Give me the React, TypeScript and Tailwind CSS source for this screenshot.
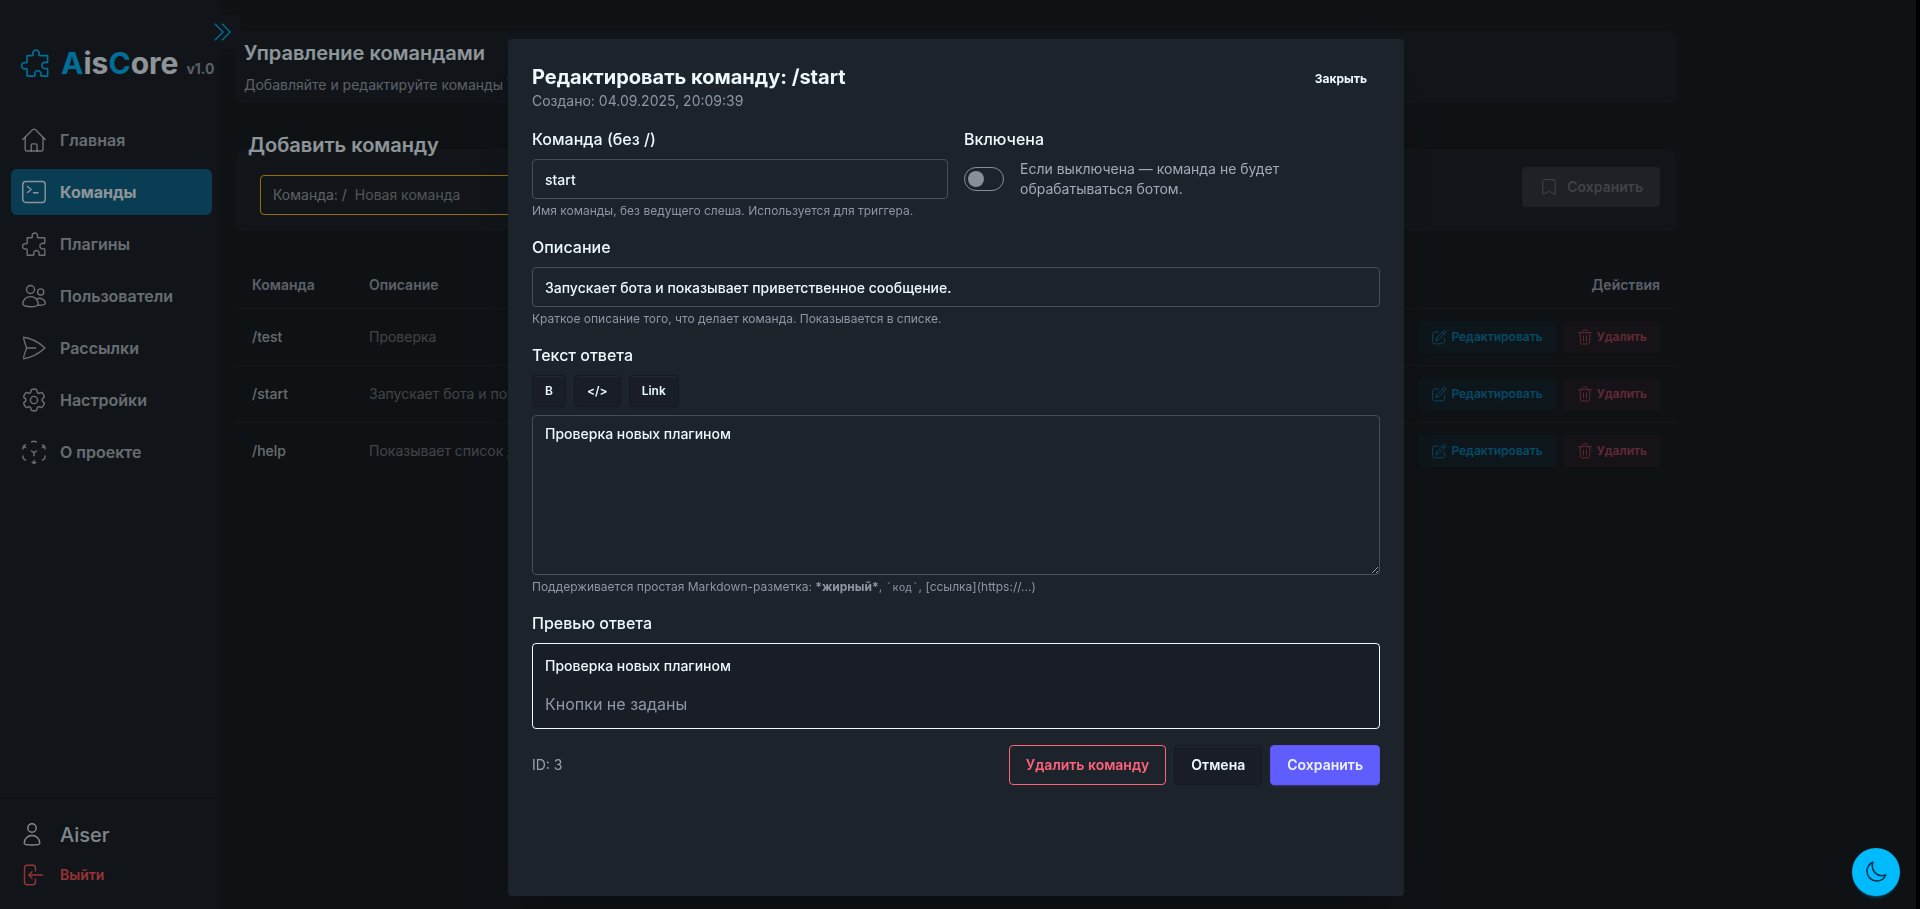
import React, { useState } from "react";
import { HiOutlineBookmark, HiOutlineCog6Tooth, HiOutlineMoon } from "react-icons/hi2";

type IconProps = { className?: string };

function Svg({ className = "size-6", children }: IconProps & { children: React.ReactNode }) {
  return (
    <svg
      className={"shrink-0 " + className}
      viewBox="0 0 24 24"
      fill="none"
      stroke="currentColor"
      strokeWidth="1.4"
      strokeLinecap="round"
      strokeLinejoin="round"
      aria-hidden="true"
    >
      {children}
    </svg>
  );
}

const PuzzleIcon = ({ className }: IconProps) => (
  <Svg className={className}>
    <path d="M5.2 5.7h4.3c.7 0 1-.5.8-1.1a2.7 2.7 0 1 1 5.1 0c-.2.6.1 1.1.8 1.1h6.6v5.1c0 .7-.5 1-1.1.7a2.8 2.8 0 1 0 0 5.2c.6-.3 1.1.1 1.1.7v5.8h-5c-.7 0-1-.5-.8-1.1a2.7 2.7 0 1 0-5.1 0c.2.6-.1 1.1-.8 1.1H5.200v-5.500c0-.7-.5-1-1.100-.8a2.700 2.700 0 1 1 0-5.100c.6.2 1.100-.1 1.100-.8Z" />
  </Svg>
);

const HomeIcon = () => (
  <Svg>
    <path d="m.8 11.600 9.700-9.800c.9-.9 2.100-.9 3 0l9.700 9.800" />
    <path d="M3.200 9.500v11.700c0 1.100.7 1.800 1.800 1.800h14.200c1.100 0 1.800-.7 1.800-1.800V9.500" />
    <path d="M9.200 23v-5.700c0-.9.5-1.400 1.300-1.400h3.200c.8 0 1.300.5 1.300 1.400V23" />
  </Svg>
);

const TerminalIcon = () => (
  <Svg>
    <rect x=".8" y="1.500" width="22.400" height="21" rx="3" />
    <path d="m5.500 6.500 3.700 3-3.700 3M11.500 12.700h4.500" />
  </Svg>
);

const UsersIcon = () => (
  <Svg>
    <circle cx="8.500" cy="5.500" r="4" />
    <circle cx="18.700" cy="8" r="3.100" />
    <path d="M.8 20c0-4 3.200-7.400 7.700-7.400s7.700 3.400 7.700 7.400c0 3.600-15.400 3.600-15.400 0Z" />
    <path d="M14.800 14.800c4.200-1.700 8.400 1 8.400 4.700 0 1.300-3.400 2-7 1.600" />
  </Svg>
);

const SendIcon = () => (
  <Svg>
    <path d="M1.500 1.300C9.500 2.400 16.600 6 23 11.900 16.600 17.700 9.500 21.400 1.500 22.700c-.4-.2 1.900-7.300 3.100-10.700C3.500 8.500 1 1.500 1.500 1.300ZM4.600 12h9" />
  </Svg>
);

const ProjectIcon = () => (
  <Svg>
    <path d="M9.700 1.900c1.500-.9 3.100-.9 4.600 0M10.200 22.300l1.800 1 1.800-1M12 20.500v2.700M1 9V7.500C1 6.300 2 5.700 3.500 5M23 9V7.500c0-1.200-1-1.800-2.500-2.500M1 16v1.500c0 1.100.9 1.800 2.500 2.500M23 16v1.500c0 1.100-.9 1.800-2.500 2.500M1.300 6.300l2.300 1.300M22.700 6.300l-2.300 1.300M9.500 11l2.500 1.700 2.500-1.700M12 12.700v3" />
  </Svg>
);

const PersonIcon = () => (
  <Svg>
    <circle cx="12" cy="5" r="4.200" />
    <path d="M4.200 20.200c0-4.400 3.300-7.700 7.800-7.700s7.800 3.300 7.800 7.700c0 2.400-15.600 2.400-15.600 0Z" />
  </Svg>
);

const LogoutIcon = () => (
  <Svg>
    <path d="M15.500 8V5c0-1.700-1-2.700-2.700-2.700H7.200C5.500 2.300 4.500 3.300 4.500 5v14c0 1.700 1 2.700 2.700 2.700h5.600c1.700 0 2.700-1 2.700-2.700v-3" />
    <path d="M22.500 12H9.300M12 8.800 8.800 12l3.200 3.200" />
  </Svg>
);

const EditIcon = () => (
  <Svg className="size-4">
    <path d="M11 4.500H5.500C3.600 4.500 2.500 5.700 2.500 7.500v11.700c0 1.800 1.100 3 3 3h11.700c1.800 0 3-1.200 3-3V14" />
    <path d="m9 13 10.200-10.700c1.200-1.300 4.200 1.600 3 3L11.700 16l-4.500 1.500L9 13ZM17 4.700 19.900 7.500" />
  </Svg>
);

const TrashIcon = () => (
  <Svg className="size-4">
    <path d="M2.500 5.500h19M8 5.300C8 2.700 8.800 1.500 10 1.500h4c1.200 0 2 1.200 2 3.800M4.500 5.800l.7 14c.1 1.800 1.100 2.700 2.800 2.700h8c1.700 0 2.700-.9 2.800-2.700l.7-14M9.700 10.500v7.500M14.300 10.500v7.500" />
  </Svg>
);

const navItems = [
  { label: "Главная", icon: <HomeIcon /> },
  { label: "Команды", icon: <TerminalIcon />, active: true },
  { label: "Плагины", icon: <PuzzleIcon /> },
  { label: "Пользователи", icon: <UsersIcon /> },
  { label: "Рассылки", icon: <SendIcon /> },
  {
    label: "Настройки",
    icon: <HiOutlineCog6Tooth className="size-6 shrink-0" viewBox="2 2 20 20" strokeWidth={1.2} />,
  },
  { label: "О проекте", icon: <ProjectIcon /> },
];

const commands = [
  { name: "/test", description: "Проверка" },
  { name: "/start", description: "Запускает бота и показывает приветственное сообщение." },
  { name: "/help", description: "Показывает список доступных команд." },
];

function Sidebar() {
  return (
    <aside className="sticky top-0 flex h-screen w-[220px] shrink-0 flex-col border-r border-[#191e24] bg-[#1d232a]">
      <button
        type="button"
        aria-label="Развернуть меню"
        className="absolute top-[15px] left-[206px] flex h-[34px] w-[34px] items-center justify-center rounded bg-[#1d232a] text-[#00bafe]"
      >
        <Svg className="size-5">
          <path d="m2.500 2.500 9.500 9.500-9.500 9.500M11 2.500l9.500 9.500-9.500 9.500" strokeWidth="1.600" />
        </Svg>
      </button>

      <div className="flex items-center gap-3 pt-[45px] pl-[21px]">
        <span className="text-[#00bafe]">
          <PuzzleIcon className="size-7" />
        </span>
        <p className="flex items-baseline gap-2 text-3xl font-bold">
          <span>
            <span className="text-[#00bafe]">A</span>is<span className="text-[#00bafe]">C</span>ore
          </span>
          <span className="text-sm text-[#99a1af]">v1.0</span>
        </p>
      </div>

      <nav className="mt-9 flex flex-col gap-1.5 pr-[7px] pl-[11px]">
        {navItems.map((item) => (
          <a
            key={item.label}
            href="#"
            aria-current={item.active ? "page" : undefined}
            className={
              "flex h-[46px] items-center gap-3.5 rounded-md pl-[11px] " +
              (item.active ? "bg-[#00bafe]/45 font-bold" : "font-semibold text-[#ecf9ff]/70")
            }
          >
            {item.icon}
            {item.label}
          </a>
        ))}
      </nav>

      <div className="mt-auto flex flex-col gap-4 border-t border-[#191e24] pt-[22px] pb-6 pl-5">
        <a href="#" className="flex items-center gap-4 text-xl font-medium text-[#ecf9ff]/90">
          <PersonIcon />
          Aiser
        </a>
        <button type="button" className="flex h-5 items-center gap-4 text-sm font-semibold text-[#fb5659]">
          <LogoutIcon />
          Выйти
        </button>
      </div>
    </aside>
  );
}

function CommandsPage() {
  return (
    <main className="min-w-0 flex-1 pt-[31px] pr-5 pl-4">
      <div className="max-w-[1440px]">
        <header className="rounded-lg bg-[#1d232a] p-2">
          <h1 className="text-xl font-semibold">Управление командами</h1>
          <p className="mt-2 text-sm text-[#99a1af]">Добавляйте и редактируйте команды Telegram-бота</p>
        </header>

        <fieldset className="mt-7 rounded-lg bg-[#1d232a] px-4 pb-4">
          <legend className="-ml-1 pb-2 text-xl font-semibold">Добавить команду</legend>
          <div className="flex items-start justify-between gap-4">
            <label className="mt-2 ml-2 flex h-10 w-full max-w-xl items-center gap-2 rounded border border-[#fcb700] px-3 text-sm">
              <span className="text-[#ecf9ff]/60">Команда: /</span>
              <input
                type="text"
                placeholder="Новая команда"
                className="min-w-0 flex-1 bg-transparent outline-none placeholder:text-[#ecf9ff]/50"
              />
            </label>
            <button
              type="button"
              disabled
              className="flex h-10 items-center gap-2 rounded border border-transparent bg-[#32383f] px-4 text-sm font-semibold text-[#ecf9ff]/30"
            >
              <HiOutlineBookmark className="size-5" strokeWidth={1.2} />
              Сохранить
            </button>
          </div>
        </fieldset>

        <table className="mt-8 w-full text-left text-sm">
          <thead>
            <tr className="h-[45px] border-b border-[#21272d] text-[#99a1af]">
              <th className="w-[117px] px-4 font-semibold">Команда</th>
              <th className="px-4 font-semibold">Описание</th>
              <th className="px-4 text-right font-semibold">Действия</th>
            </tr>
          </thead>
          <tbody>
            {commands.map((command) => (
              <tr key={command.name} className="border-b border-[#21272d] last:border-b-0">
                <td className="px-4 py-3 font-medium text-[#ecf9ff]/70">{command.name}</td>
                <td className="px-4 py-3 text-[#ecf9ff]/40">{command.description}</td>
                <td className="px-4 py-3">
                  <div className="flex justify-end gap-2 text-xs font-semibold opacity-60">
                    <button
                      type="button"
                      className="flex h-8 items-center gap-1 rounded border border-transparent bg-[#00bafe]/8 px-3 text-[#00bafe]"
                    >
                      <EditIcon />
                      Редактировать
                    </button>
                    <button
                      type="button"
                      className="flex h-8 items-center gap-1 rounded border border-transparent bg-[#ff627d]/8 px-3 text-[#ff627d]"
                    >
                      <TrashIcon />
                      Удалить
                    </button>
                  </div>
                </td>
              </tr>
            ))}
          </tbody>
        </table>
      </div>
    </main>
  );
}

const neutralButton =
  "rounded border border-[#15191f] bg-[#191e26] font-semibold shadow-[0_3px_2px_-2px_#191e2633,inset_0_1px_0_#ffffff0a]";
const fieldStyle = "w-full rounded border border-[#474e57] bg-[#1d232a] px-3 text-sm outline-none";
const hintStyle = "mt-1 text-xs text-[#8f97a5]";

function EditDialog() {
  const [name, setName] = useState("start");
  const [enabled, setEnabled] = useState(false);
  const [description, setDescription] = useState("Запускает бота и показывает приветственное сообщение.");
  const [answer, setAnswer] = useState("Проверка новых плагином");

  return (
    <div className="fixed inset-0 flex justify-center bg-black/40 pt-[39px] pr-2 pb-[13px]">
      <section
        role="dialog"
        aria-modal="true"
        aria-labelledby="dialog-title"
        className="flex w-full max-w-4xl flex-col gap-4 overflow-y-auto rounded bg-[#1d232a] p-6 shadow-2xl"
      >
        <header className="flex items-start justify-between">
          <div>
            <h2 id="dialog-title" className="text-xl font-bold">Редактировать команду: /start</h2>
            <p className="text-sm text-[#8f97a5]">Создано: 04.09.2025, 20:09:39</p>
          </div>
          <button type="button" className="h-8 rounded border border-transparent px-3 text-xs font-bold">
            Закрыть
          </button>
        </header>

        <div className="grid grid-cols-2 gap-4">
          <div>
            <label htmlFor="name" className="mb-2 block font-medium">Команда (без /)</label>
            <input
              id="name"
              type="text"
              value={name}
              onChange={(e) => setName(e.target.value)}
              className={"h-10 font-medium " + fieldStyle}
            />
            <p className={hintStyle}>Имя команды, без ведущего слеша. Используется для триггера.</p>
          </div>
          <div>
            <label htmlFor="enabled" className="mb-2 block font-medium">Включена</label>
            <div className="flex items-center gap-4">
              <input
                id="enabled"
                type="checkbox"
                role="switch"
                checked={enabled}
                onChange={(e) => setEnabled(e.target.checked)}
                className="flex h-6 w-10 shrink-0 appearance-none items-center rounded-full border border-[#888f97] px-[3px] before:size-4 before:rounded-full before:bg-[#888f97] checked:justify-end"
              />
              <span className="text-sm text-[#a3abb8]">Если выключена — команда не будет обрабатываться ботом.</span>
            </div>
          </div>
        </div>

        <div>
          <label htmlFor="description" className="mb-2 block font-medium">Описание</label>
          <input
            id="description"
            type="text"
            value={description}
            onChange={(e) => setDescription(e.target.value)}
            className={"h-10 font-medium " + fieldStyle}
          />
          <p className={hintStyle}>Краткое описание того, что делает команда. Показывается в списке.</p>
        </div>

        <div>
          <label htmlFor="answer" className="mb-2 block font-medium">Текст ответа</label>
          <div className="mb-2 flex gap-2 text-xs">
            <button type="button" className={"h-8 px-3 " + neutralButton}>B</button>
            <button type="button" className={"h-8 px-3 " + neutralButton}>&lt;/&gt;</button>
            <button type="button" className={"h-8 px-3 " + neutralButton}>Link</button>
          </div>
          <textarea
            id="answer"
            value={answer}
            onChange={(e) => setAnswer(e.target.value)}
            className={"block h-40 resize py-2 font-medium " + fieldStyle}
          />
          <p className={hintStyle}>
            Поддерживается простая Markdown-разметка: <b>*жирный*</b>,{" "}
            <code className="font-['Liberation_Mono',monospace] text-[11px] leading-none">`код`</code>,
            [ссылка](https://...)
          </p>
        </div>

        <div>
          <h3 className="mb-2 font-medium">Превью ответа</h3>
          <div className="flex flex-col gap-4 rounded border border-[#ecf9ff] bg-[#191e26] p-3">
            <p className="text-sm font-medium">{answer}</p>
            <p className="text-[#8f97a5]">Кнопки не заданы</p>
          </div>
        </div>

        <footer className="flex items-center gap-2 text-sm">
          <span className="mr-auto text-[#99a1af]">ID: 3</span>
          <button type="button" className="h-10 rounded border border-[#ff627d] px-4 font-semibold text-[#ff627d]">
            Удалить команду
          </button>
          <button type="button" className={"h-10 px-4 " + neutralButton}>Отмена</button>
          <button
            type="button"
            className="h-10 rounded border border-[#5b58f2] bg-[#605dff] px-4 font-semibold text-[#edf1fe] shadow-[0_3px_2px_-2px_#605dff66]"
          >
            Сохранить
          </button>
        </footer>
      </section>
    </div>
  );
}

export default function App() {
  return (
    <div className="flex min-h-screen bg-[#191e24] font-['Inter',sans-serif] text-[#ecf9ff]">
      <Sidebar />
      <CommandsPage />
      <EditDialog />
      <button
        type="button"
        aria-label="Переключить тему"
        className="fixed right-5 bottom-[13px] flex size-12 items-center justify-center rounded-full bg-[#00bafe] text-[#042e49] shadow-[0_3px_3px_-2px_#00bafe80]"
      >
        <HiOutlineMoon className="size-6" strokeWidth={1.5} />
      </button>
      <div className="fixed inset-y-0 right-0 w-1 bg-black" />
    </div>
  );
}
